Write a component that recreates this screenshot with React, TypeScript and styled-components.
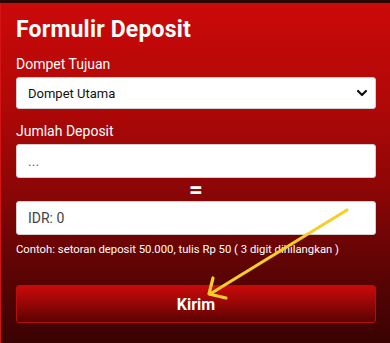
import styled, { createGlobalStyle } from "styled-components";

const GlobalStyle = createGlobalStyle`
    html, body {
        margin: 0;
        padding: 0;
        background: #2a0606;
    }
    * {
        box-sizing: border-box;
    }
`;

const Page = styled.div`
    position: relative;
    width: 390px;
    height: 343px;
    padding-top: 3px;
    overflow: hidden;
    font-family: "Roboto", "Liberation Sans", sans-serif;
`;

const Card = styled.form`
    height: 340px;
    display: flex;
    flex-direction: column;
    padding: 14px 14px 0 15px;
    border-left: 1px solid #d41414;
    background: linear-gradient(
        180deg,
        #cb0909 0%,
        #b00808 30%,
        #8c0606 55%,
        #5e0404 78%,
        #3a0202 100%
    );
`;

const Title = styled.h1`
    margin: 0 0 13px;
    color: #ffffff;
    font-size: 23px;
    line-height: 26px;
    font-weight: 700;
    letter-spacing: 0.2px;
`;

const Label = styled.label`
    display: block;
    margin-bottom: 5px;
    color: #ffffff;
    font-size: 14px;
    line-height: 16px;
`;

const Field = styled.div<{ $gap?: number }>`
    margin-bottom: ${(p) => p.$gap ?? 0}px;
`;

const SelectWrap = styled.div`
    position: relative;
`;

const Select = styled.select`
    width: 100%;
    height: 32px;
    padding: 0 30px 0 11px;
    appearance: none;
    border: 1px solid #cfcfcf;
    border-radius: 3px;
    background: #ffffff;
    color: #111111;
    font-family: inherit;
    font-size: 13px;
`;

const Chevron = styled.svg`
    position: absolute;
    right: 8px;
    top: 11px;
    pointer-events: none;
`;

const Input = styled.input`
    width: 100%;
    height: 34px;
    padding: 0 11px;
    border: 1px solid #cfcfcf;
    border-radius: 3px;
    background: #ffffff;
    color: #444444;
    font-family: inherit;
    font-size: 14px;

    &::placeholder {
        color: #666666;
    }
`;

const Equals = styled.div`
    height: 23px;
    display: flex;
    justify-content: center;
    align-items: center;
    color: #ffffff;
    font-size: 24px;
    font-weight: 700;
    line-height: 1;
`;

const Hint = styled.p`
    margin: 8px 0 0;
    color: #ffffff;
    font-size: 11.3px;
    line-height: 14px;
`;

const Button = styled.button`
    margin-top: 28px;
    width: 100%;
    height: 38px;
    border: 1px solid #b80d0d;
    border-radius: 3px;
    background: linear-gradient(180deg, #c80a0a 0%, #a00707 40%, #5a0303 100%);
    color: #ffffff;
    font-family: inherit;
    font-size: 16px;
    font-weight: 700;
    cursor: pointer;
`;

const Arrow = styled.svg`
    position: absolute;
    left: 0;
    top: 0;
    pointer-events: none;
`;

export default function App() {
    return (
        <>
            <GlobalStyle />
            <Page>
                <Card onSubmit={(e) => e.preventDefault()}>
                    <Title>Formulir Deposit</Title>
                    <Field $gap={14}>
                        <Label>Dompet Tujuan</Label>
                        <SelectWrap>
                            <Select defaultValue="utama">
                                <option value="utama">Dompet Utama</option>
                            </Select>
                            <Chevron width="12" height="10" viewBox="0 0 12 10">
                                <path
                                    d="M2 3 L6 7 L10 3"
                                    fill="none"
                                    stroke="#111"
                                    strokeWidth="2.2"
                                    strokeLinecap="round"
                                    strokeLinejoin="round"
                                />
                            </Chevron>
                        </SelectWrap>
                    </Field>
                    <Field>
                        <Label>Jumlah Deposit</Label>
                        <Input placeholder="..." />
                    </Field>
                    <Equals>=</Equals>
                    <Input defaultValue="IDR: 0" readOnly />
                    <Hint>
                        Contoh: setoran deposit 50.000, tulis Rp 50 ( 3 digit dihilangkan )
                    </Hint>
                    <Button type="submit">Kirim</Button>
                </Card>
                <Arrow width="390" height="343" viewBox="0 0 390 343">
                    <g
                        fill="none"
                        stroke="#f7cd2c"
                        strokeWidth="3.2"
                        strokeLinecap="round"
                        strokeLinejoin="round"
                    >
                        <path d="M347 210 L210 294" />
                        <path d="M213 278 L209 294 L226 298" />
                    </g>
                </Arrow>
            </Page>
        </>
    );
}
